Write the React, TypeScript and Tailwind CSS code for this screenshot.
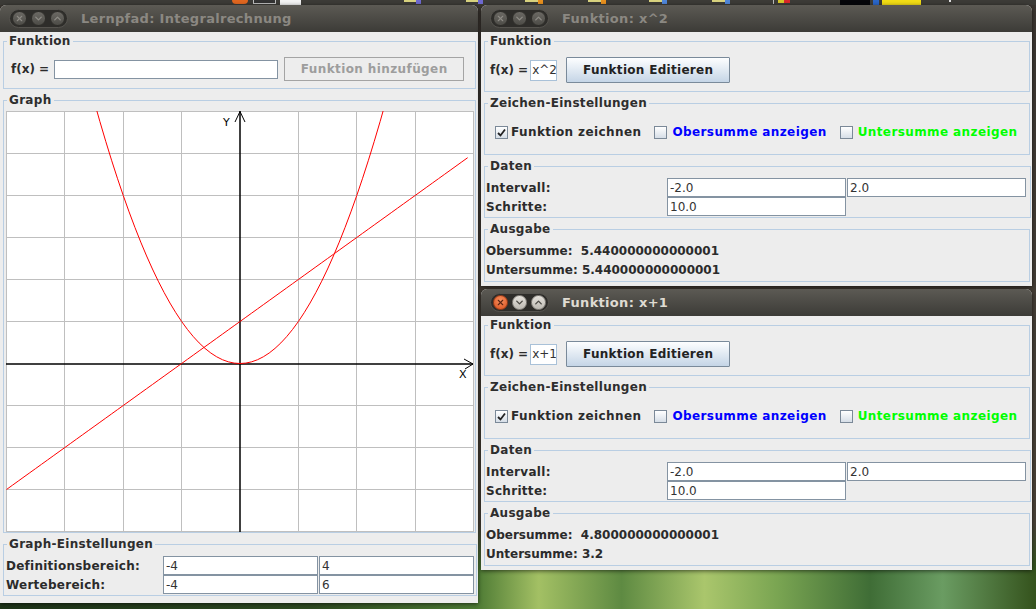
import React from "react";
import { X, ChevronDown, ChevronUp } from "lucide-react";

// plot helpers: x -4..4, y -4..6 on a 468x421 canvas
const sx = (v: number) => 0.5 + (v + 4) * 58.375;
const sy = (v: number) => 0.5 + (6 - v) * 42;
const xs = Array.from({ length: 80 }, (_, i) => -4 + i * 0.1);

function TitleButtons({ active }: { active: boolean }) {
  const base =
    "w-[15px] h-[15px] rounded-full flex items-center justify-center border";
  const idle =
    "bg-[linear-gradient(#6b6964,#4d4c47)] border-[#302f2b] text-[#8e8c86]";
  return (
    <div className="flex items-center gap-[4px] h-[19px] px-[2px] rounded-full bg-[#2e2d2a] border border-[#55534e]">
      <span
        className={`${base} ${
          active
            ? "bg-[radial-gradient(circle_at_50%_35%,#f7905f,#d84f1d)] border-[#9c3d19] text-[#5b2413]"
            : idle
        }`}
      >
        <X size={9} strokeWidth={3} />
      </span>
      <span
        className={`${base} ${
          active
            ? "bg-[linear-gradient(#e4e1db,#bdbab3)] border-[#8a8781] text-[#4a4944]"
            : idle
        }`}
      >
        <ChevronDown size={11} strokeWidth={3} />
      </span>
      <span
        className={`${base} ${
          active
            ? "bg-[linear-gradient(#e4e1db,#bdbab3)] border-[#8a8781] text-[#4a4944]"
            : idle
        }`}
      >
        <ChevronUp size={11} strokeWidth={3} />
      </span>
    </div>
  );
}

function Window({
  title,
  active = false,
  className,
  children,
}: {
  title: string;
  active?: boolean;
  className: string;
  children: React.ReactNode;
}) {
  return (
    <div
      className={`absolute flex flex-col rounded-t-[6px] bg-[#ededed] shadow-[0_1px_4px_rgba(0,0,0,0.6)] ${className}`}
    >
      <div className="h-[27px] shrink-0 flex items-center pl-[9px] rounded-t-[6px] bg-[linear-gradient(#5c5a54,#3c3b37)]">
        <TitleButtons active={active} />
        <span
          className={`ml-[13px] text-[13px] font-bold tracking-[0.3px] ${
            active ? "text-[#dfdbd2]" : "text-[#8b8882]"
          }`}
        >
          {title}
        </span>
      </div>
      <div className="flex flex-col pl-[3px] pr-[2px] pt-[1px]">{children}</div>
    </div>
  );
}

function Group({
  title,
  className = "",
  children,
}: {
  title: string;
  className?: string;
  children: React.ReactNode;
}) {
  return (
    <fieldset className={`border border-[#b9cee3] ${className}`}>
      <legend className="ml-[3px] px-[2px] text-[12px] leading-[16px] font-bold tracking-[0.3px] text-[#2e2e2e]">
        {title}
      </legend>
      {children}
    </fieldset>
  );
}

function Field({ value }: { value: string }) {
  return (
    <input
      readOnly
      value={value}
      className="h-[19px] w-full border border-[#8493a2] bg-white px-[2px] text-[12px] font-normal tracking-normal text-[#333] outline-none"
    />
  );
}

function Check({ checked = false, className = "" }: { checked?: boolean; className?: string }) {
  return (
    <span
      className={`w-[13px] h-[13px] shrink-0 flex items-center justify-center border border-[#7b8998] bg-[linear-gradient(#ffffff,#d6dee7)] ${className}`}
    >
      {checked && (
        <svg width="9" height="9" viewBox="0 0 9 9">
          <path d="M1 5 L3.5 7.5 L8 1.5" fill="none" stroke="#222" strokeWidth="1.8" />
        </svg>
      )}
    </span>
  );
}

function Graph() {
  const parab = xs.map((v) => `${sx(v)},${sy(v * v)}`).join(" ");
  const line = xs.map((v) => `${sx(v)},${sy(v + 1)}`).join(" ");
  const x0 = Math.round(sx(0));
  const y0 = Math.round(sy(0));
  return (
    <svg width="468" height="421" className="block bg-white">
      <g stroke="#bfbfbf" strokeWidth="1" shapeRendering="crispEdges">
        {[-4, -3, -2, -1, 1, 2, 3, 4].map((v) => (
          <line key={"v" + v} x1={sx(v)} y1="0" x2={sx(v)} y2="421" />
        ))}
        {[-4, -3, -2, -1, 1, 2, 3, 4, 5, 6].map((v) => (
          <line key={"h" + v} x1="0" y1={sy(v)} x2="468" y2={sy(v)} />
        ))}
      </g>
      <g stroke="#000" strokeWidth="1.5" fill="none">
        <line x1={x0} y1="0" x2={x0} y2="421" />
        <line x1="0" y1={y0} x2="467" y2={y0} />
      </g>
      <g stroke="#000" strokeWidth="1" fill="none">
        <polyline points={`${x0 - 5},11 ${x0},0.5 ${x0 + 5},11`} />
        <polyline points={`458,${y0 - 5} 467,${y0} 459,${y0 + 5}`} />
      </g>
      <text x={x0 - 17} y="15" fontSize="11" fontFamily="DejaVu Sans" fill="#000">
        Y
      </text>
      <text x="453" y={y0 + 14} fontSize="11" fontFamily="DejaVu Sans" fill="#000">
        X
      </text>
      <polyline points={parab} fill="none" stroke="#ff0000" strokeWidth="1" />
      <polyline points={line} fill="none" stroke="#ff0000" strokeWidth="1" />
    </svg>
  );
}

function FunctionWindow({
  title,
  expr,
  active,
  ober,
  unter,
  className,
}: {
  title: string;
  expr: string;
  active?: boolean;
  ober: string;
  unter: string;
  className: string;
}) {
  return (
    <Window title={title} active={active} className={className}>
      <Group title="Funktion">
        <div className="flex items-center pl-[5px] pt-[8px] pb-[8px] text-[12px]">
          <span className="font-bold text-[#2b2b2b]">f(x) =</span>
          <span className="ml-[2px] h-[21px] w-[27px] flex items-center overflow-hidden border border-[#a9c1d8] bg-white pl-[1px] text-[#333]">
            {expr}
          </span>
          <button className="ml-[9px] w-[164px] h-[26px] border border-[#7a8a9a] rounded-[1px] bg-[linear-gradient(#fdfeff,#c5d5e6)] font-bold tracking-[0.3px] text-[#222]">
            Funktion Editieren
          </button>
        </div>
      </Group>
      <Group title="Zeichen-Einstellungen" className="mt-[3px]">
        <div className="flex items-center h-[20px] pl-[10px] mt-[11px] mb-[12px] text-[12px] font-bold tracking-[0.4px]">
          <Check checked />
          <span className="ml-[3px] text-[#2b2b2b]">Funktion zeichnen</span>
          <Check className="ml-[13px]" />
          <span className="ml-[5px] text-[#0000ff]">Obersumme anzeigen</span>
          <Check className="ml-[13px]" />
          <span className="ml-[5px] text-[#00ff00]">Untersumme anzeigen</span>
        </div>
      </Group>
      <Group title="Daten" className="mt-[3px]">
        <div className="grid grid-cols-[181px_179px_179px] gap-x-[1px] auto-rows-[19px] pt-[4px] pb-[1px] pr-[4px] text-[12px] font-bold tracking-[0.3px] text-[#2b2b2b]">
          <span className="pl-[1px] flex items-center">Intervall:</span>
          <Field value="-2.0" />
          <Field value="2.0" />
          <span className="pl-[1px] flex items-center">Schritte:</span>
          <Field value="10.0" />
          <span />
        </div>
      </Group>
      <Group title="Ausgabe" className="mt-[3px]">
        <div className="flex flex-col pt-[4px] pb-[2px] pl-[1px] text-[12px] font-bold text-[#2b2b2b] whitespace-pre">
          <span className="h-[19px] flex items-center">{`Obersumme:  ${ober}`}</span>
          <span className="h-[19px] flex items-center">{`Untersumme: ${unter}`}</span>
        </div>
      </Group>
    </Window>
  );
}

export default function App() {
  return (
    <div className="relative w-[1036px] h-[609px] overflow-hidden font-['DejaVu_Sans',sans-serif] bg-[linear-gradient(180deg,#3b3631_0%,#4a4238_86%,transparent_93%),linear-gradient(90deg,#1d3318_0%,#2e4a22_30%,#4d7a34_46%,#a3c064_52%,#5e8a42_60%,#aac66c_68%,#7aa552_75%,#3f6d36_84%,#6a9c62_91%,#34521c_100%)]">
      {/* top panel edge */}
      <div className="h-[5px] bg-[#3c3b37] flex items-start">
        <span className="ml-[232px] w-[16px] h-[4px] rounded-b-full bg-[#e0661f]" />
        <span className="ml-[5px] w-[23px] h-[4px] border border-t-0 border-[#bdbdbd] bg-[#333]" />
        <span className="ml-[4px] w-[21px] h-[5px] bg-[#f2f2f2]" />
        <span className="ml-[103px] w-[12px] h-[2px] bg-[#d8d27e]" />
        <span className="w-[5px] h-[4px] bg-[#6e69d0]" />
        <span className="ml-[45px] w-[12px] h-[2px] bg-[#d8d27e]" />
        <span className="w-[5px] h-[4px] bg-[#6e69d0]" />
        <span className="ml-[42px] w-[13px] h-[2px] bg-[#d8d27e]" />
        <span className="w-[5px] h-[4px] bg-[#e8901e]" />
        <span className="ml-[45px] w-[13px] h-[2px] bg-[#d8d27e]" />
        <span className="w-[5px] h-[4px] bg-[#e8901e]" />
        <span className="ml-[43px] w-[13px] h-[2px] bg-[#d8d27e]" />
        <span className="w-[5px] h-[4px] bg-[#4f86d9]" />
        <span className="ml-[45px] w-[13px] h-[2px] bg-[#d8d27e]" />
        <span className="w-[5px] h-[4px] bg-[#4f86d9]" />
        <span className="ml-[43px] w-[1px] h-[4px] bg-[#bbbbbb]" />
        <span className="ml-[4px] w-[6px] h-[3px] bg-[#d6c629]" />
        <span className="w-[6px] h-[3px] bg-[#d8282a]" />
        <span className="ml-[50px] w-[30px] h-[5px] bg-[#05060a]" />
        <span className="ml-[3px] w-[6px] h-[5px] bg-[#2a66c8]" />
        <span className="ml-[3px] w-[39px] h-[5px] bg-[#f1dc14]" />
        <span className="ml-[28px] w-[2px] h-[2px] bg-[#dddddd]" />
      </div>

      <Window title="Lernpfad: Integralrechnung" className="left-0 top-[5px] w-[478px] h-[598px]">
        <Group title="Funktion">
          <div className="flex items-center pl-[7px] pt-[8px] pb-[7px] text-[12px]">
            <span className="font-bold text-[#2b2b2b]">f(x) =</span>
            <input
              readOnly
              className="ml-[5px] w-[224px] h-[19px] border border-[#8493a2] bg-white outline-none"
            />
            <button className="ml-[6px] w-[180px] h-[24px] border border-[#a4a4a4] font-bold tracking-[0.4px] text-[#9d9d9d]">
              Funktion hinzufügen
            </button>
          </div>
        </Group>
        <Group title="Graph" className="mt-[3px]">
          <div className="pl-[2px] pt-[3px]">
            <Graph />
          </div>
        </Group>
        <Group title="Graph-Einstellungen" className="mt-[3px]">
          <div className="grid grid-cols-[158px_155px_155px] gap-x-[1px] auto-rows-[19px] pt-[4px] pb-[1px] pr-[2px] text-[12px] font-bold tracking-[0.25px] text-[#2b2b2b]">
            <span className="pl-[2px] flex items-center">Definitionsbereich:</span>
            <Field value="-4" />
            <Field value="4" />
            <span className="pl-[2px] flex items-center">Wertebereich:</span>
            <Field value="-4" />
            <Field value="6" />
          </div>
        </Group>
      </Window>

      <FunctionWindow
        title="Funktion: x^2"
        expr="x^2"
        ober="5.440000000000001"
        unter="5.440000000000001"
        className="left-[481px] top-[5px] w-[551px] h-[281px]"
      />
      <FunctionWindow
        title="Funktion: x+1"
        expr="x+1"
        active
        ober="4.800000000000001"
        unter="3.2"
        className="left-[481px] top-[289px] w-[551px] h-[281px]"
      />
    </div>
  );
}
